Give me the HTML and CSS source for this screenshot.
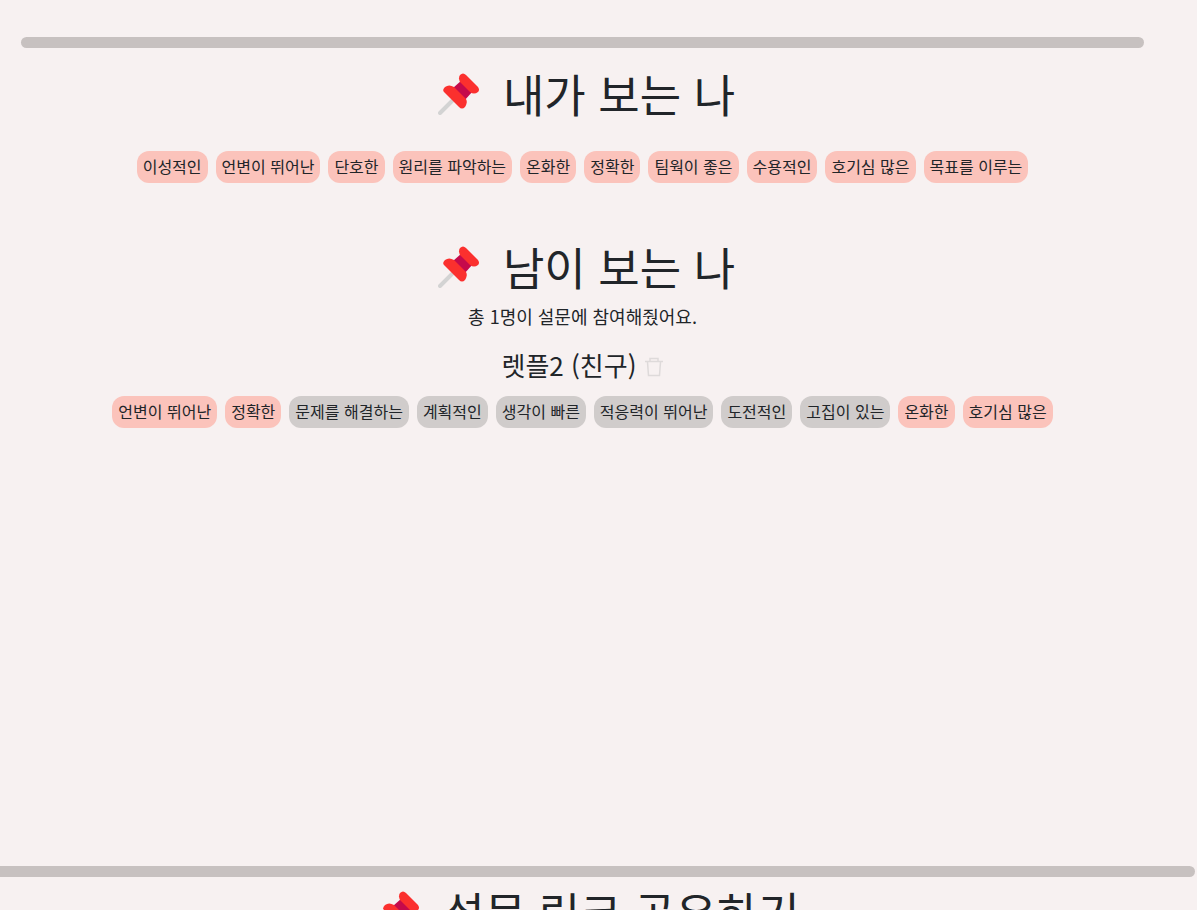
FILE: index.html
```html
<!DOCTYPE html>
<html lang="ko">
<head>
<meta charset="utf-8">
<meta name="viewport" content="width=device-width, initial-scale=1">
<title>내가 보는 나</title>
<link rel="stylesheet" href="styles.css">
</head>
<body>
<svg class="defs" aria-hidden="true">
  <symbol id="pin" viewBox="0 0 42 42">
    <path d="M2 40 16 26" stroke="#d3d3d3" stroke-width="4" stroke-linecap="round"/>
    <path d="M15 15 24 7 35 18 26 28Z" fill="#c50a4b"/>
    <path d="M7 14Q11 11 16 14L28 26Q30 29 27 34Q24 37 21 34L6 19Q4 17 7 14Z" fill="#fb302e"/>
    <path d="M22 2Q25 -1 28 2L40 14Q42 17 40 19Q36 22 32 19L22 9Q20 5 22 2Z" fill="#fb302e"/>
  </symbol>
</svg>
<main>
  <section class="results">
    <hr class="bar">
    <h1 class="title"><svg class="pin" aria-hidden="true"><use href="#pin"/></svg><span>내가 보는 나</span></h1>
    <ul class="chips">
      <li class="chip">이성적인</li><li class="chip">언변이 뛰어난</li><li class="chip">단호한</li><li class="chip">원리를 파악하는</li><li class="chip">온화한</li><li class="chip">정확한</li><li class="chip">팀웍이 좋은</li><li class="chip">수용적인</li><li class="chip">호기심 많은</li><li class="chip">목표를 이루는</li>
    </ul>
    <h1 class="title others"><svg class="pin" aria-hidden="true"><use href="#pin"/></svg><span>남이 보는 나</span></h1>
    <p class="count">총 1명이 설문에 참여해줬어요.</p>
    <div class="person">
      <h2 class="name">렛플2 (친구)</h2>
      <button class="delete" type="button" aria-label="삭제">
        <svg class="trash" viewBox="0 0 18 20" fill="none" stroke="#dedada" stroke-width="1.5" aria-hidden="true"><path d="M0 4.5H18M5 4V1.5H13V4M2.5 5 3.5 18.5H14.5L15.5 5"/></svg>
      </button>
    </div>
    <ul class="chips">
      <li class="chip">언변이 뛰어난</li><li class="chip">정확한</li><li class="chip differs">문제를 해결하는</li><li class="chip differs">계획적인</li><li class="chip differs">생각이 빠른</li><li class="chip differs">적응력이 뛰어난</li><li class="chip differs">도전적인</li><li class="chip differs">고집이 있는</li><li class="chip">온화한</li><li class="chip">호기심 많은</li>
    </ul>
  </section>
  <section class="share">
    <hr class="bar">
    <h1 class="title"><svg class="pin" aria-hidden="true"><use href="#pin"/></svg><span>설문 링크 공유하기</span></h1>
  </section>
</main>
</body>
</html>
```
FILE: styles.css
```css
* { box-sizing: border-box; }
html { overflow: hidden; height: 100%; }
body {
  margin: 0;
  height: 100%;
  overflow: hidden;
  background: #f7f1f1;
  color: #212529;
  font-family: "Noto Sans CJK KR", sans-serif;
}
.defs { display: none; }
.results {
  min-height: 866px;
  padding: 37px 53px 0 21px;
}
.share { margin: 0 2px 0 -17px; }
.bar {
  height: 11px;
  margin: 0;
  border: 0;
  border-radius: 6px;
  background: #c7c1c0;
}
.title {
  display: flex;
  align-items: center;
  justify-content: center;
  gap: 23px;
  margin: 14px 0 0;
  padding-left: 8px;
  font-size: 45px;
  font-weight: 400;
  line-height: 64px;
}
.share .title { margin-top: 3px; padding-left: 0; }
.title.others { margin-top: 52px; }
.pin { width: 42px; height: 42px; }
.chips {
  display: flex;
  flex-wrap: wrap;
  justify-content: center;
  gap: 8px;
  margin: 25px 0 0;
  padding: 0;
  list-style: none;
}
.chip {
  padding: 0 6px 2px;
  border-radius: 12px;
  background: #fbc3bb;
  font-size: 16px;
  line-height: 30px;
}
.chip.differs { background: #d0cccb; }
.count {
  margin: 5px 0 0;
  text-align: center;
  font-size: 18px;
  line-height: 24px;
}
.person {
  display: flex;
  align-items: center;
  justify-content: center;
  gap: 9px;
  margin-top: 18px;
}
.name {
  margin: 0;
  font-size: 26px;
  font-weight: 400;
  line-height: 38px;
}
.delete {
  display: flex;
  padding: 4px 0 0;
  border: 0;
  background: none;
}
.trash { width: 18px; height: 20px; }
.person + .chips { margin-top: 12px; }
```
